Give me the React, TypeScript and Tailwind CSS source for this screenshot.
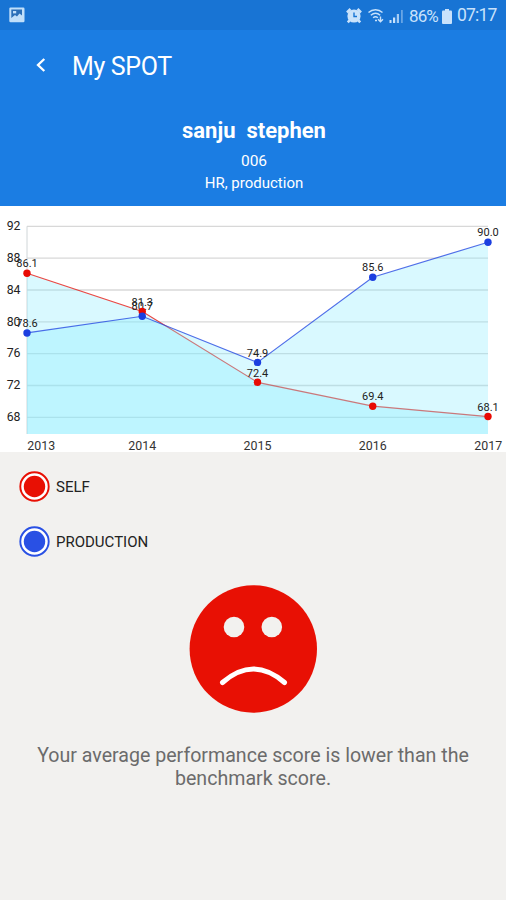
import React from 'react';

interface Series {
  name: string;
  color: string;
  values: number[];
}

const years = ['2013', '2014', '2015', '2016', '2017'];
const ticks = [92, 88, 84, 80, 76, 72, 68];

const series: Series[] = [
  { name: 'SELF', color: '#e80b04', values: [86.1, 81.3, 72.4, 69.4, 68.1] },
  { name: 'PRODUCTION', color: '#1b3fe0', values: [78.6, 80.7, 74.9, 85.6, 90.0] },
];

const LEFT = 27;
const RIGHT = 488;
const BOTTOM = 228;

const xAt = (i: number) => LEFT + (i * (RIGHT - LEFT)) / (years.length - 1);
const yAt = (v: number) => 20.3 + (92 - v) * 7.96;

const StatusBar: React.FC = () => (
  <div className="flex h-[30px] items-center justify-between bg-[#1874d4] pl-[9px] pr-[9px] text-[#c9e2fb]">
    <svg width="16" height="16" viewBox="0 0 16 16">
      <rect x="0.3" y="0.5" width="15.2" height="14.8" rx="1.2" fill="#c0dffa" />
      <path d="M2.3 2.5H13v6L10.5 6.5 8 9.5 6 8 2.3 11z" fill="#2a6fb8" />
      <path d="M4 4h3.2v2.4H4z" fill="#c0dffa" />
    </svg>
    <div className="flex items-center pt-[2px]">
      {/* Alarm */}
      <svg width="16" height="16" viewBox="0 0 16 16" className="mr-[6px]">
        <circle cx="8" cy="8" r="6.6" fill="currentColor" />
        <path d="M1 4.5 4.5 1M15 4.5 11.5 1M3.8 12.2l-2 2.2M12.2 12.2l2 2.2" stroke="currentColor" strokeWidth="2.6" />
        <path d="M8 4.5v4h3" fill="none" stroke="#1874d4" strokeWidth="1.4" />
      </svg>
      {/* Wifi */}
      <svg width="17" height="16" viewBox="0 0 17 16" className="mr-[4px]" fill="none" stroke="currentColor" strokeWidth="1.4">
        <path d="M0.5 4.5C4.5 0.8 10.5 0.8 14.5 4.5M2.8 7.2c3-2.5 6.5-2.5 9.4 0M5.1 9.8c1.5-1.3 3.3-1.3 4.8 0" />
        <path d="M7 12.5h2M12.5 8.5v5M10 11.3l2.5 2.5 2.5-2.5" />
      </svg>
      {/* Signal */}
      <svg width="15" height="15" viewBox="0 0 15 15" className="mr-[5px]" fill="currentColor">
        <path d="M0.5 11h2v3h-2zM4 8.5h2.2V14H4z" />
        <path d="M7.8 5H10v9H7.8z" opacity="0.8" />
        <path d="M12 1h1.8v13H12z" opacity="0.45" />
      </svg>
      <span className="w-[30px] whitespace-nowrap text-[17px] leading-none tracking-[-0.9px]">86%</span>
      <svg width="10" height="15" viewBox="0 0 10 15" className="mr-[5px] ml-[3px]" fill="currentColor">
        <path d="M3 0h4v2H3z" />
        <rect y="1.5" width="10" height="13.5" rx="1" />
      </svg>
      <span className="w-[40px] whitespace-nowrap text-[17.5px] leading-none tracking-[-0.8px]">07:17</span>
    </div>
  </div>
);

const Header: React.FC = () => (
  <header className="h-[176px] bg-[#1b7de3] text-white">
    <div className="flex h-[72px] items-center pl-[35px]">
      <svg width="12" height="16" viewBox="0 0 12 16" className="mb-[3px]">
        <path d="M9.3 2 3 8l6.3 6" fill="none" stroke="currentColor" strokeWidth="2.3" />
      </svg>
      <h1 className="ml-[25px] text-[25px] leading-none tracking-[-0.35px]">My SPOT</h1>
    </div>
    <div className="flex flex-col items-center pl-[2px] pt-[16px]">
      <h2 className="whitespace-pre text-[22px] font-bold leading-[26px]">sanju  stephen</h2>
      <p className="mt-[7px] text-[15.5px] leading-[20px]">006</p>
      <p className="mt-[3px] text-[15px] leading-[18px]">HR, production</p>
    </div>
  </header>
);

const Chart: React.FC = () => (
  <svg width="506" height="246" viewBox="0 0 506 246" className="block bg-white">
    {ticks.map((t) => (
      <line key={t} x1={LEFT} x2={RIGHT} y1={yAt(t)} y2={yAt(t)} stroke="#d8d8d8" strokeWidth="1.3" />
    ))}
    <line x1={LEFT} x2={LEFT} y1={yAt(92)} y2={BOTTOM} stroke="#d0d6d8" />
    {ticks.map((t) => (
      <text key={t} x="20.5" y={yAt(t) + 3.8} fontSize="12.3" textAnchor="end" fill="#222">{t}</text>
    ))}
    {/* Filled areas under the lines */}
    {series.map((s) => {
      const points = s.values.map((v, i) => `${xAt(i)},${yAt(v)}`).join(' ');
      return (
        <g key={s.name}>
          <polygon points={`${LEFT},${BOTTOM} ${points} ${RIGHT},${BOTTOM}`} fill="#80eafe" fillOpacity="0.3" />
          <polyline points={points} fill="none" stroke={s.color} strokeOpacity="0.75" strokeWidth="1.2" />
        </g>
      );
    })}
    {series.map((s) =>
      s.values.map((v, i) => (
        <text key={`${s.name}-${i}`} x={xAt(i)} y={yAt(v) - 5.8} fontSize="11" textAnchor="middle" fill="#222">
          {v.toFixed(1)}
        </text>
      ))
    )}
    {series.map((s) =>
      s.values.map((v, i) => <circle key={`${s.name}-${i}`} cx={xAt(i)} cy={yAt(v)} r="3.7" fill={s.color} />)
    )}
    {years.map((y, i) => (
      <text key={y} x={i === 0 ? 41.3 : i === 4 ? 488.3 : xAt(i)} y="244.2" fontSize="12.4" textAnchor="middle" fill="#333">
        {y}
      </text>
    ))}
  </svg>
);

const LegendItem: React.FC<{ color: string; label: string }> = ({ color, label }) => (
  <div className="flex items-center gap-[6px]">
    <svg width="31" height="31" viewBox="0 0 31 31">
      <circle cx="15.5" cy="15.5" r="14.2" fill="#fff" stroke={color} strokeWidth="1.9" />
      <circle cx="15.5" cy="15.5" r="10.7" fill={color} />
    </svg>
    <span className="pt-[1px] text-[15px] leading-none text-[#222]">{label}</span>
  </div>
);

const SadFace: React.FC = () => (
  <svg width="128" height="128" viewBox="0 0 128 128">
    <circle cx="64.3" cy="64" r="63.7" fill="#e81004" />
    <circle cx="45" cy="42" r="10.3" fill="#f2f1ef" />
    <circle cx="82.8" cy="42" r="10.3" fill="#f2f1ef" />
    <path d="M33.5 97.5Q64.3 70.5 95.5 97.5" fill="none" stroke="#fff" strokeWidth="5" strokeLinecap="round" />
  </svg>
);

const App: React.FC = () => {
  return (
    <div className="h-[900px] w-[506px] overflow-hidden bg-[#f2f1ef] font-[Roboto,sans-serif]">
      <StatusBar />
      <Header />
      <Chart />
      <div className="flex flex-col gap-[24px] pl-[19px] pt-[19px]">
        <LegendItem color="#e81004" label="SELF" />
        <LegendItem color="#2950e4" label="PRODUCTION" />
      </div>
      <div className="mt-[28px] flex flex-col items-center">
        <SadFace />
        <p className="mt-[31px] w-[450px] text-center text-[19.6px] leading-[23px] text-[#6b6b6b]">
          Your average performance score is lower than the benchmark score.
        </p>
      </div>
    </div>
  );
};

export default App;
